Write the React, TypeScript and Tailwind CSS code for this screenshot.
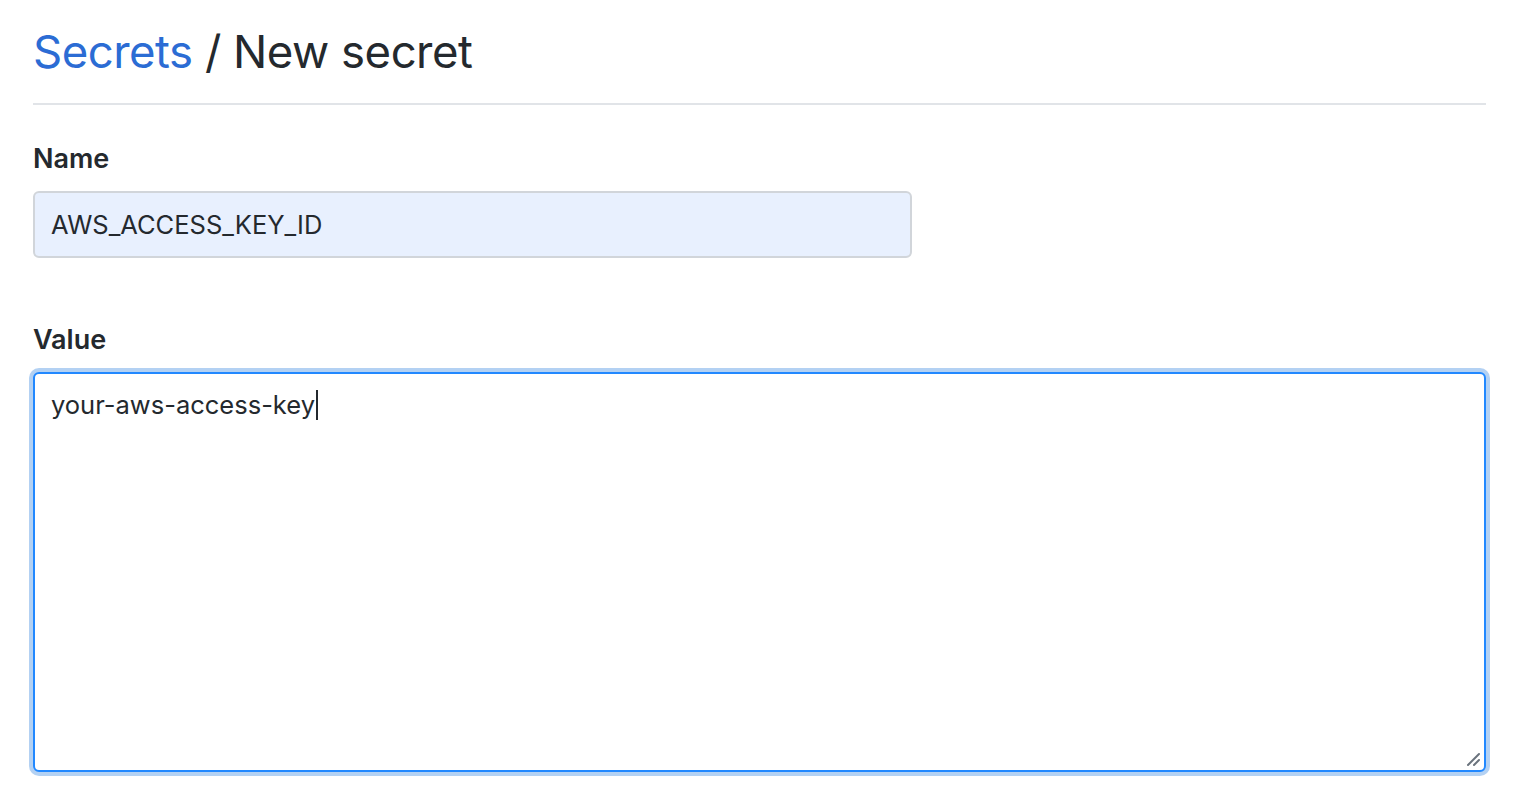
import React from "react";

// Resize grip drawn in the textarea's bottom-right corner
const ResizeGrip: React.FC = () => (
  <svg className="absolute bottom-[3px] right-[3px]" width="16" height="16" viewBox="0 0 16 16">
    <path d="M3 14L14 3M9 14L14 9" stroke="#6a737d" strokeWidth="2" strokeLinecap="round" />
  </svg>
);

export default function App() {
  return (
    <div
      className="min-h-screen bg-white pl-[33px] pr-[28px] pt-[22px] text-[#24292e]"
      style={{ fontFamily: "Inter, 'Liberation Sans', sans-serif" }}
    >
      <div className="border-b-2 border-[#e1e4e8] pb-[21px]">
        <h2 className="text-[45.5px] font-normal leading-[60px] tracking-[-0.5px]">
          <a className="text-[#2b6cd4]">Secrets</a>
          <span> / New secret</span>
        </h2>
      </div>

      <form className="pt-[34px]">
        <div>
          <label className="block text-[27px] font-semibold leading-[40px]">Name</label>
          <div className="mt-[12px] flex h-[67px] w-[879px] items-center rounded-[6px] border-2 border-[#d1d5da] bg-[#e8f0fe] px-[16px] pt-[2px] text-[25.5px]">
            AWS_ACCESS_KEY_ID
          </div>
        </div>

        <div className="mt-[62px]">
          <label className="block text-[27px] font-semibold leading-[40px]">Value</label>
          <div className="relative mt-[12px] h-[400px] rounded-[6px] border-2 border-[#2188ff] bg-white px-[16px] pt-[10px] text-[25.5px] leading-[40px] shadow-[0_0_0_4px_rgba(3,102,214,0.3)]">
            <span>your-aws-access-key</span>
            <span className="ml-[1px] inline-block h-[30px] w-[2px] translate-y-[6px] bg-[#24292e]" />
            <ResizeGrip />
          </div>
        </div>
      </form>
    </div>
  );
}
